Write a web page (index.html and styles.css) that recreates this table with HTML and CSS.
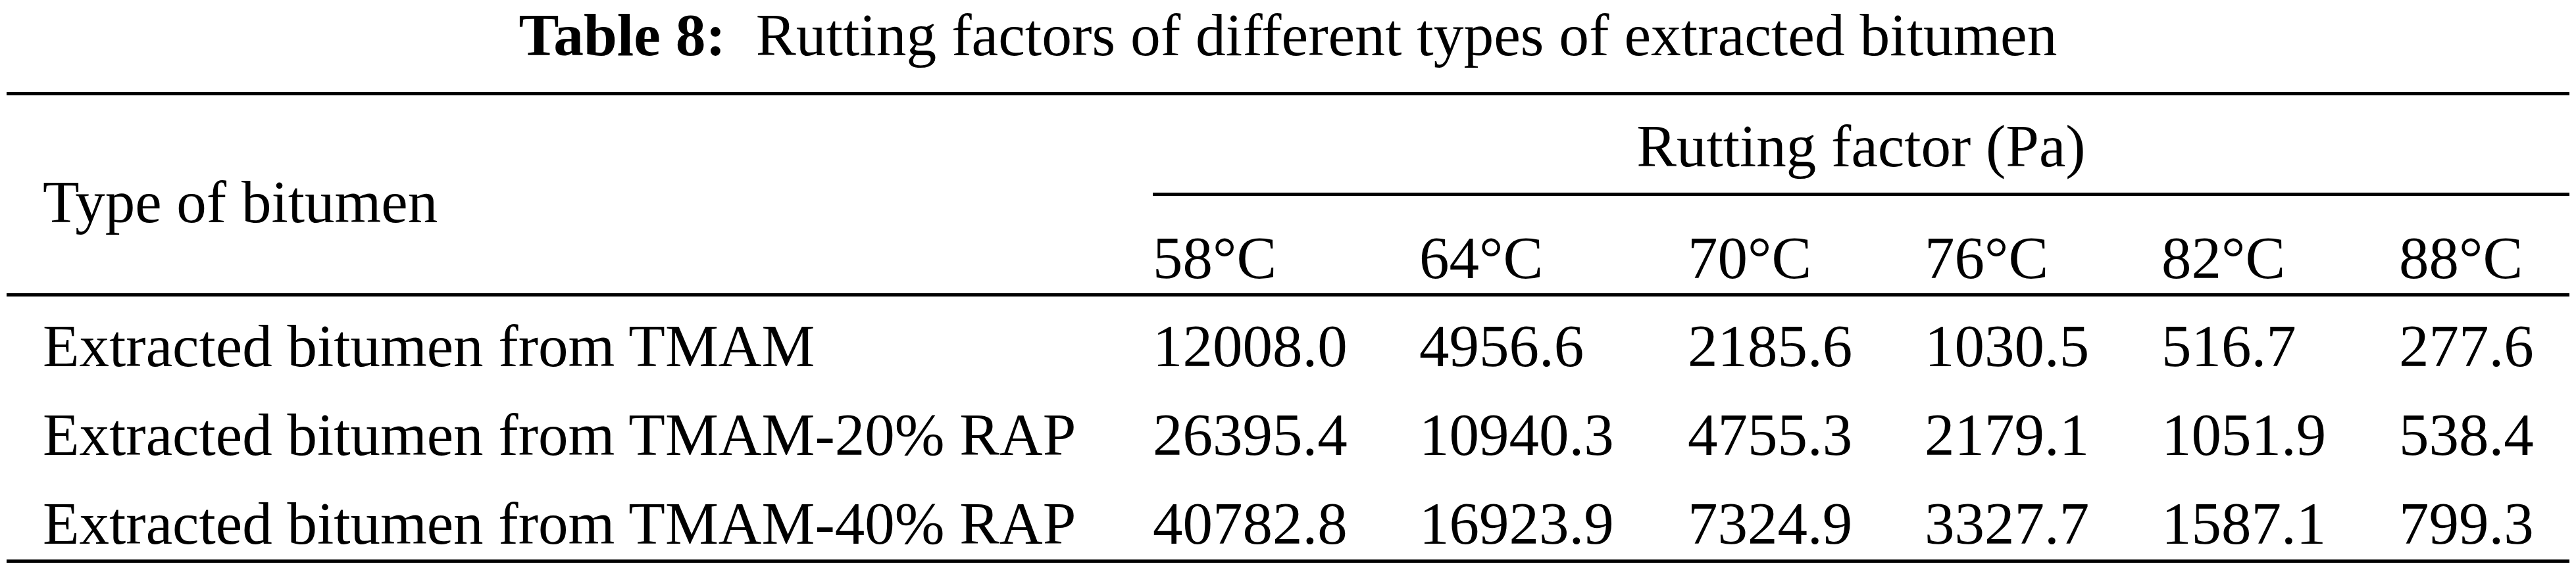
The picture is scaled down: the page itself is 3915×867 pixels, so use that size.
FILE: index.html
```html
<!DOCTYPE html>
<html lang="en">
<head>
<meta charset="utf-8">
<title>Table 8: Rutting factors of different types of extracted bitumen</title>
<link rel="stylesheet" href="styles.css">
</head>
<body>
<div class="caption"><span class="caption-label">Table 8:</span>&nbsp; Rutting factors of different types of extracted bitumen</div>
<div class="table">
  <div class="th th-type">Type of bitumen</div>
  <div class="th th-group">Rutting factor (Pa)</div>
  <div class="th th-temp">58°C</div>
  <div class="th th-temp">64°C</div>
  <div class="th th-temp">70°C</div>
  <div class="th th-temp">76°C</div>
  <div class="th th-temp">82°C</div>
  <div class="th th-temp">88°C</div>

  <div class="td td-name">Extracted bitumen from TMAM</div>
  <div class="td">12008.0</div>
  <div class="td">4956.6</div>
  <div class="td">2185.6</div>
  <div class="td">1030.5</div>
  <div class="td">516.7</div>
  <div class="td">277.6</div>

  <div class="td td-name">Extracted bitumen from TMAM-20% RAP</div>
  <div class="td">26395.4</div>
  <div class="td">10940.3</div>
  <div class="td">4755.3</div>
  <div class="td">2179.1</div>
  <div class="td">1051.9</div>
  <div class="td">538.4</div>

  <div class="td td-name last">Extracted bitumen from TMAM-40% RAP</div>
  <div class="td last">40782.8</div>
  <div class="td last">16923.9</div>
  <div class="td last">7324.9</div>
  <div class="td last">3327.7</div>
  <div class="td last">1587.1</div>
  <div class="td last">799.3</div>
</div>
</body>
</html>
```
FILE: styles.css
```css
html, body {
  margin: 0;
  padding: 0;
  background: #fff;
}
body {
  font-family: "Liberation Serif", "Times New Roman", serif;
  font-size: 91px;
  color: #000;
  width: 3915px;
}
.caption {
  text-align: center;
  font-size: 91.5px;
  line-height: 100px;
  padding-top: 3px;
  height: 100px;
  margin-bottom: 37px;
  white-space: nowrap;
}
.caption-label {
  font-weight: bold;
}
.table {
  margin: 0 10px;
  display: grid;
  grid-template-columns: 1742px 405px 408px 360px 360px 361px 259px;
  border-top: 5px solid #000;
  border-bottom: 5px solid #000;
  line-height: 100px;
  white-space: nowrap;
}
.th {
  font-weight: normal;
}
.th-type {
  grid-column: 1;
  grid-row: 1 / span 2;
  padding-left: 55px;
  padding-top: 113px;
  border-bottom: 5px solid #000;
}
.th-group {
  grid-column: 2 / span 6;
  text-align: center;
  padding: 28px 0 20px;
  border-bottom: 5px solid #000;
}
.th-temp {
  padding: 45px 0 3px;
  border-bottom: 5px solid #000;
}
.td {
  padding: 26px 0 9px;
}
.td-name {
  padding-left: 55px;
}
.td.last {
  padding-bottom: 4px;
}
```
